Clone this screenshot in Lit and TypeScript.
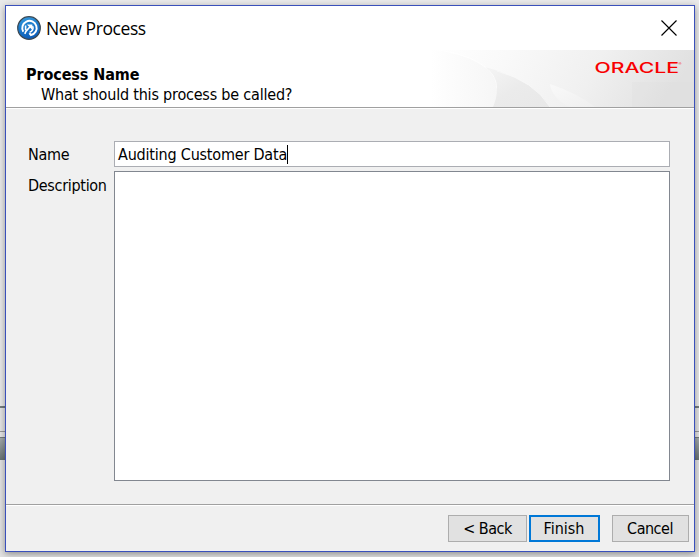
import { LitElement, html, css, svg } from "lit";
import { customElement } from "lit/decorators.js";

const closeIcon = svg`<path d="M.5 .5L15.5 15.5M15.5 .5L.5 15.5" stroke="#000" stroke-width="1.15" fill="none"/>`;

@customElement("process-icon")
class ProcessIcon extends LitElement {
  static styles = css`:host { display: block; width: 24px; height: 24px; } svg { display: block; }`;
  render() {
    return html`<svg width="24" height="24" viewBox="0 0 24 24">
      <defs><linearGradient id="g" x1="0" y1="0" x2="0.3" y2="1">
        <stop offset="0" stop-color="#3b9fe0"/><stop offset="0.5" stop-color="#1a7acb"/><stop offset="1" stop-color="#0e5fba"/>
      </linearGradient></defs>
      <circle cx="12" cy="12" r="11.3" fill="url(#g)" stroke="#3c4852" stroke-width="1.2"/>
      <path d="M6.3 15.8A7.2 7.2 0 1 1 14 19.1L12.4 17.1" fill="none" stroke="#fff" stroke-width="2"/>
      <path d="M12.6 16.2A4.2 4.2 0 0 0 15.6 10.2M7.8 17.8L8.9 15.5L13 10.8M8.6 14.2V9.6" fill="none" stroke="#fff" stroke-width="1.6"/>
      <path d="M9.8 8.4H15.4V14Z" fill="#fff"/>
    </svg>`;
  }
}

@customElement("wizard-banner")
class WizardBanner extends LitElement {
  static styles = css`
    :host { display: block; width: 263px; height: 57px; }
    svg { display: block; }
    .logo { font: 500 14.5px Inter, "Liberation Sans", sans-serif; fill: #f80000; }
    .mark { font: 4px "Liberation Sans", sans-serif; fill: #f80000; }
  `;
  render() {
    return html`<svg width="263" height="57" viewBox="0 0 263 57">
      <defs>
        <linearGradient id="bg" x2="1" y2=".12"><stop offset="0" stop-color="#fff"/><stop offset=".3" stop-color="#f9f9f9"/><stop offset=".65" stop-color="#f0f0f0"/><stop offset="1" stop-color="#e1e1e1"/></linearGradient>
        <linearGradient id="leaf"><stop offset="0" stop-color="#fff"/><stop offset=".3" stop-color="#fcfcfc"/><stop offset="1" stop-color="#f6f6f6"/></linearGradient>
        <linearGradient id="fold" x2="1" y2="1"><stop offset="0" stop-color="#f5f5f5"/><stop offset=".5" stop-color="#ebebeb"/><stop offset="1" stop-color="#e8e8e8"/></linearGradient>
        <linearGradient id="ray" x2="1" y2="1"><stop offset="0" stop-color="#f9f9f9"/><stop offset="1" stop-color="#efefef"/></linearGradient>
      </defs>
      <rect width="263" height="57" fill="url(#bg)"/>
      <path d="M13 1Q42 6 58 20Q72 35 62 57H0V0Z" fill="url(#leaf)"/>
      <path d="M13 1Q42 6 58 20Q66 28 66 38" fill="none" stroke="#fff" opacity=".8"/>
      <path d="M54 17Q66 25 66 38Q66 48 62 57H119Q103 30 54 17Z" fill="url(#fold)"/>
      <path d="M66 21Q103 31 119 57" fill="none" stroke="#fafafa" opacity=".7"/>
      <path d="M119 34Q120 47 138 57H164Q146 43 119 34Z" fill="url(#ray)"/>
      <path d="M201 32H263V57H201Z" fill="#dddddd" opacity=".2"/>
      <text class="logo" x="163.5" y="22.8" textLength="84.5" lengthAdjust="spacingAndGlyphs">ORACLE</text>
      <text class="mark" x="247.5" y="15">®</text>
    </svg>`;
  }
}

@customElement("app-root")
class AppRoot extends LitElement {
  static styles = css`
    :host {
      display: grid; grid-template-columns: 5px 690px 4px; grid-template-rows: 5px 547px 5px;
      width: 699px; height: 557px; overflow: hidden; box-sizing: border-box;
      background: linear-gradient(#eaeaea 0 406px, #757d7e 406px 408px, #e5e5e5 408px 431px, #999 431px 432px, #e5e5e5 432px 437px, #747b7b 437px 438px, #a4abac 438px, #697374 460px, #e3e3e3 460px);
      font: 16px "DejaVu Sans Condensed", "DejaVu Sans", sans-serif; font-stretch: condensed; color: #000;
    }
    * { box-sizing: border-box; }
    .dialog {
      grid-area: 2 / 2; display: flex; flex-direction: column; border: 1px solid #3a50bb; background: #f0f0f0;
      box-shadow: 0 2px 7px rgba(0,0,0,.38);
    }
    .title { height: 44px; padding: 0 17px 0 11px; display: flex; align-items: center; background: #fff; flex: none; }
    .title span { flex: 1; margin-left: 5px; font: 17.5px/24px "Open Sans", "Noto Sans", sans-serif; letter-spacing: -.4px; }
    .header { height: 58px; display: flex; justify-content: space-between; background: #fff; border-bottom: 1px solid #a0a0a0; flex: none; }
    .copy { padding: 14px 0 0 20px; line-height: 20px; white-space: nowrap; }
    .copy b, .copy span { display: block; }
    .copy b { letter-spacing: -.1px; padding-top: 1px; margin-bottom: -1px; }
    .copy span { margin-left: 15px; padding-top: 1px; letter-spacing: -.2px; }
    .form { flex: 1; min-height: 0; border-top: 1px solid #fff; display: grid; grid-template-columns: 86px 556px; grid-template-rows: 26px 310px; row-gap: 4px; padding: 32px 0 0 22px; }
    label { line-height: 28px; letter-spacing: -.3px; }
    label.desc { padding-top: 1px; }
    .input { border: 1px solid #abadb3; background: #fff; display: flex; align-items: center; padding-left: 3px; letter-spacing: -.2px; }
    .caret { width: 1px; height: 19px; background: #000; }
    .area { border: 1px solid #828790; background: #fff; }
    .footer { flex: none; height: 47px; border-top: 1px solid #a0a0a0; box-shadow: inset 0 1px #fff; display: flex; justify-content: flex-end; padding: 10px 5px 0 0; }
    button { height: 27px; border: 1px solid #adadad; background: #e1e1e1; font: inherit; letter-spacing: -.4px; padding: 0; color: #000; }
    .back { width: 79px; margin-right: 2px; letter-spacing: -.5px; }
    .finish { width: 71px; border: 2px solid #0078d7; margin-right: 12px; letter-spacing: 0; padding-right: 1px; }
    .cancel { width: 77px; letter-spacing: -.5px; padding-right: 1px; }
  `;
  render() {
    return html`<div class="dialog">
      <div class="title"><process-icon></process-icon><span>New Process</span><svg width="16" height="16" viewBox="0 0 16 16">${closeIcon}</svg></div>
      <div class="header"><div class="copy"><b>Process Name</b><span>What should this process be called?</span></div><wizard-banner></wizard-banner></div>
      <div class="form">
        <label>Name</label><div class="input"><span>Auditing Customer Data</span><i class="caret"></i></div>
        <label class="desc">Description</label><div class="area"></div>
      </div>
      <div class="footer"><button class="back">&lt; Back</button><button class="finish">Finish</button><button class="cancel">Cancel</button></div>
    </div>`;
  }
}
